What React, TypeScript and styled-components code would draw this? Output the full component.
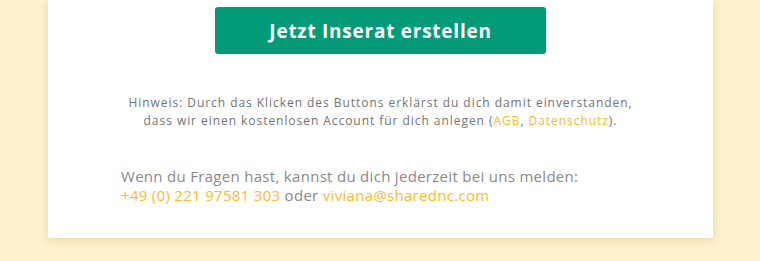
import React from "react";
import styled, { createGlobalStyle } from "styled-components";

const Global = createGlobalStyle`
  html, body { margin: 0; padding: 0; background: #fef1cd; }
  body { font-family: "Open Sans", "Liberation Sans", sans-serif; }
`;

const Page = styled.div`
  padding: 0 47px 23px 48px;
`;

const Card = styled.div`
  background: #fff;
  box-shadow: 0 2px 8px rgba(160, 130, 60, 0.25);
  padding: 7px 73px 33px;
  display: flex;
  flex-direction: column;
  align-items: center;
`;

const Button = styled.button`
  width: 331px;
  height: 47px;
  border: none;
  border-radius: 3px;
  background: #029b77;
  color: #fff;
  font-family: inherit;
  font-weight: 700;
  font-size: 19px;
  letter-spacing: 0.75px;
  cursor: pointer;
`;

const Note = styled.p`
  margin: 40px 0 0;
  text-align: center;
  font-size: 12px;
  line-height: 18px;
  letter-spacing: 0.95px;
  color: #747474;
`;

const Contact = styled.p`
  align-self: stretch;
  margin: 37px 0 0;
  font-size: 15px;
  line-height: 19px;
  letter-spacing: 0.3px;
  color: #8a8a8a;
`;

const Link = styled.a`
  color: #fcbb2f;
  text-decoration: none;
`;

export default function App() {
  return (
    <>
      <Global />
      <Page>
        <Card>
          <Button>Jetzt Inserat erstellen</Button>
          <Note>
            Hinweis: Durch das Klicken des Buttons erklärst du dich damit einverstanden,
            <br />
            dass wir einen kostenlosen Account für dich anlegen (<Link href="#">AGB</Link>,{" "}
            <Link href="#">Datenschutz</Link>).
          </Note>
          <Contact>
            Wenn du Fragen hast, kannst du dich jederzeit bei uns melden:
            <br />
            <Link href="#">+49 (0) 221 97581 303</Link> oder{" "}
            <Link href="#">viviana@sharednc.com</Link>
          </Contact>
        </Card>
      </Page>
    </>
  );
}
